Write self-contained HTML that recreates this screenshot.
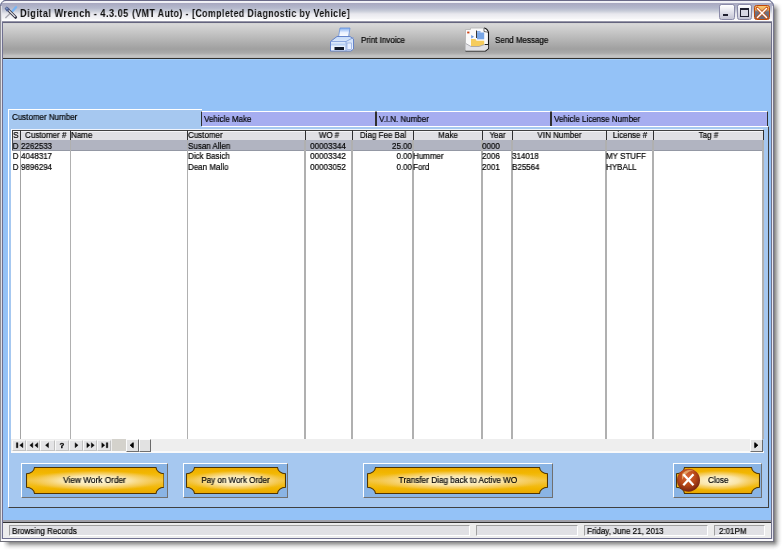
<!DOCTYPE html><html><head><meta charset="utf-8"><style>
*{margin:0;padding:0;box-sizing:border-box}
html,body{width:783px;height:550px;overflow:hidden;background:#fff;font-family:"Liberation Sans",sans-serif;font-size:8px;color:#000}
.a{position:absolute}
.t{position:absolute;white-space:nowrap;line-height:10px;will-change:transform;-webkit-text-stroke:0.2px #000}
</style></head><body>
<div class="a" style="left:774px;top:3px;width:9px;height:539px;background:linear-gradient(90deg,rgba(0,0,0,.52),rgba(0,0,0,.34) 2px,rgba(0,0,0,.16) 4px,rgba(0,0,0,.05) 6px,rgba(0,0,0,0) 8px);-webkit-mask-image:linear-gradient(rgba(0,0,0,0) 0,#000 7px)"></div>
<div class="a" style="left:3px;top:542px;width:771px;height:8px;background:linear-gradient(180deg,rgba(0,0,0,.46),rgba(0,0,0,.32) 2px,rgba(0,0,0,.15) 4px,rgba(0,0,0,.05) 6px,rgba(0,0,0,0) 8px);-webkit-mask-image:linear-gradient(90deg,rgba(0,0,0,0) 0,#000 7px)"></div>
<div class="a" style="left:774px;top:542px;width:9px;height:8px;background:radial-gradient(circle at 0 0,rgba(0,0,0,.48),rgba(0,0,0,.3) 2px,rgba(0,0,0,.14) 4px,rgba(0,0,0,.04) 6px,rgba(0,0,0,0) 8px)"></div>
<div class="a" style="left:0;top:0;width:774px;height:542px;background:#94c2f7;border-radius:6px 6px 0 0;overflow:hidden">
<div class="a" style="left:0;top:0;width:774px;height:23px;background:linear-gradient(#5a5a78 0,#5a5a78 1px,#f2f2f6 1px,#eeeef4 3px,#a8a8c0 3px,#b4b8cc 8px,#c8ccd8 11px,#e8e8ee 14px,#f6f6f8 19px,#ffffff 20px,#fcfcfe 21.3px,#64647e 21.6px,#64647e 23px)"></div>
<div class="a" style="left:0;top:0;width:774px;height:23px;border-radius:6px 6px 0 0;border:1px solid #6a6a88;border-bottom:none"></div>
<div class="t" style="left:19.5px;top:7px;font-weight:bold;font-size:11px;line-height:12px;letter-spacing:0.5px;-webkit-text-stroke:0;color:#101010;transform-origin:0 0;transform:scaleX(0.845)">Digital Wrench - 4.3.05</div>
<div class="t" style="left:132.3px;top:7px;font-weight:bold;font-size:11px;line-height:12px;letter-spacing:0.5px;-webkit-text-stroke:0;color:#101010;transform-origin:0 0;transform:scaleX(0.802)">(VMT Auto) -</div>
<div class="t" style="left:192px;top:7px;font-weight:bold;font-size:11px;line-height:12px;letter-spacing:0.5px;-webkit-text-stroke:0;color:#101010;transform-origin:0 0;transform:scaleX(0.803)">[Completed Diagnostic by Vehicle]</div>
<svg class="a" style="left:3px;top:5px" width="15" height="15" viewBox="0 0 15 15"><path d="M13 2.2 L9.4 6.2" stroke="#78b4f4" stroke-width="2.4" stroke-linecap="round"/><path d="M8.8 6.8 L2.4 13" stroke="#a8a8b0" stroke-width="1.3"/><path d="M4.5 4.2 L12.6 12.3" stroke="#383848" stroke-width="3" stroke-linecap="round"/><path d="M5 4.6 L12.3 11.9" stroke="#f4f4f8" stroke-width="1.1"/><path d="M1.6 3.6 L3.6 1.4 L6.4 3.4 L6 5.6 L3.8 6.4 Z" fill="#506090"/><path d="M2.5 3.2 L3.6 2.2 L5 3.4 L4 4.6 Z" fill="#8098c8"/></svg>
<div class="a" style="left:719px;top:4px;width:15.5px;height:15.5px;border:1px solid #8a8aa8;border-radius:2.5px;background:linear-gradient(#ffffff,#e8e8f0 40%,#c4c4d4)"></div>
<div class="a" style="left:723px;top:14px;width:5px;height:2px;background:#202030"></div>
<div class="a" style="left:736.5px;top:4px;width:15.5px;height:15.5px;border:1px solid #8a8aa8;border-radius:2.5px;background:linear-gradient(#ffffff,#e8e8f0 40%,#c4c4d4)"></div>
<div class="a" style="left:740px;top:8px;width:8.5px;height:8.5px;border:1px solid #202030;border-top-width:2px;background:#d8d8e4"></div>
<div class="a" style="left:754px;top:4.5px;width:15.5px;height:15.5px;border:1px solid #c04808;border-radius:2.5px;background:linear-gradient(#f8c870 0,#f0b060 25%,#707080 45%,#686878)"></div>
<svg class="a" style="left:754px;top:4.5px" width="16" height="16" viewBox="0 0 16 16"><path d="M3.2 3.2 L12.8 12.8 M12.8 3.2 L3.2 12.8" stroke="#c85010" stroke-width="3" stroke-linecap="round"/><path d="M3.5 3.5 L12.5 12.5 M12.5 3.5 L3.5 12.5" stroke="#ffffff" stroke-width="1.5" stroke-linecap="round"/></svg>
<div class="a" style="left:0;top:6px;width:2px;height:536px;background:linear-gradient(90deg,#909098 0,#909098 1px,#e0e0e8 1px,#e0e0e8 2px)"></div>
<div class="a" style="left:2px;top:22px;width:1px;height:520px;background:#707090"></div>
<div class="a" style="left:772px;top:6px;width:2px;height:536px;background:linear-gradient(90deg,#e8e8f0 0,#e8e8f0 1px,#787890 1px)"></div>
<div class="a" style="left:771px;top:22px;width:1px;height:520px;background:#707088"></div>
<div class="a" style="left:3px;top:23px;width:768px;height:36px;background:linear-gradient(#d0d0d0 0,#d8d8d8 1px,#c4c4c4 10px,#a0a0a0 26px,#aaaaaa 30px,#c4c4c4 33px,#bcbcbc 35px,#303030 35px,#303030 36px)"></div>
<div class="a" style="left:3px;top:59px;width:768px;height:1px;background:#a6d0fc"></div>
<div class="t" style="left:360.5px;top:34.6px;font-size:8.5px;transform-origin:0 0;transform:scaleX(0.94);">Print Invoice</div>
<div class="t" style="left:495px;top:34.6px;font-size:8.5px;transform-origin:0 0;transform:scaleX(0.94);">Send Message</div>
<svg class="a" style="left:326px;top:24px" width="32" height="30" viewBox="0 0 32 30"><defs><linearGradient id="pp" x1="0" y1="0" x2="0" y2="1"><stop offset="0" stop-color="#80aef0"/><stop offset="0.5" stop-color="#e8f0ff"/><stop offset="1" stop-color="#ffffff"/></linearGradient><linearGradient id="pb" x1="0" y1="0" x2="0" y2="1"><stop offset="0" stop-color="#c8dcf8"/><stop offset="1" stop-color="#f4f8ff"/></linearGradient></defs><path d="M14 4 L24 4 L22.5 13 L12.5 13 Z" fill="url(#pp)" stroke="#6890d8" stroke-width="0.8"/><path d="M4.5 17.5 L11 12.5 L24 12.5 L27.5 15 L27.5 25 L25 27 L4.5 27 Z" fill="url(#pb)" stroke="#5a7cc8" stroke-width="0.9"/><path d="M4.5 17.5 L20 17.5 L20 27" fill="none" stroke="#7898d8" stroke-width="0.8"/><path d="M20 17.5 L27.5 13.5" fill="none" stroke="#7898d8" stroke-width="0.8"/><rect x="5" y="19.5" width="14.5" height="2" fill="#b8d0f4"/><rect x="8.5" y="23" width="9.5" height="3" fill="#101828"/><rect x="21" y="19" width="4.5" height="6.5" fill="#e8f0ff" stroke="#7898d8" stroke-width="0.6"/></svg>
<svg class="a" style="left:460px;top:24px" width="32" height="30" viewBox="0 0 32 30"><path d="M5.5 5.5 L10.5 5.5 L10.5 4 L24 4 L28.5 8.5 L28.5 24.5 L25.5 27 L5.5 27 Z" fill="#fafafa"/><path d="M5.5 27 L5.5 5.5 L10.5 5.5 L10.5 4 L24 4" fill="none" stroke="#b8b8b8" stroke-width="0.9"/><path d="M24 4 Q27.5 4.5 28.5 8.5 L28.5 24.5 L25.5 27 L5.5 27" fill="none" stroke="#141414" stroke-width="1.1"/><path d="M24 4.2 L24 7.5 L28 8.2" fill="#ffffff" stroke="#303030" stroke-width="0.7"/><rect x="7.2" y="7.6" width="2.2" height="1.8" fill="#d04010"/><path d="M16.5 6.5 L16.5 14" stroke="#202020" stroke-width="0.9"/><rect x="17" y="8.5" width="7.2" height="6.8" fill="#78a6e6"/><rect x="17" y="7" width="3.5" height="1.8" fill="#88b0ec"/><path d="M11.2 11 L14 12.8 L11.2 14.4 Z" fill="#6898e0"/><path d="M11 15 L15.5 15 L16.5 16.8 L24.2 16.8 L24.2 20.5 L19 22.5 L11 22.5 Z" fill="#f6cc5c"/><path d="M5.8 19.5 L11 22.5 L19 22.5 L24.5 20.5 L28.2 20.5 L28.2 24.3 L25.3 26.6 L5.8 26.6 Z" fill="#e2e2e6"/><path d="M5.8 19.5 L11 22.5 L19 22.5 L24.5 20.5" fill="none" stroke="#909098" stroke-width="0.7"/><path d="M24.8 20.5 L28.3 20.5" stroke="#202020" stroke-width="1"/></svg>
<div class="a" style="left:8px;top:126px;width:761px;height:382px;background:#a6c8f0;border-top:1px solid #fff;border-left:1px solid #fff;border-right:1px solid #404040;border-bottom:1px solid #404040"></div>
<div class="a" style="left:8px;top:109px;width:194px;height:19px;background:#a6c8f0;border-top:1px solid #fff;border-left:1px solid #fff"></div>
<div class="t" style="left:12px;top:112px;font-size:8.5px;transform-origin:0 0;transform:scaleX(0.94);">Customer Number</div>
<div class="a" style="left:201px;top:111px;width:175px;height:15px;background:#a6adf0;border-top:1px solid #fff;border-right:1px solid #303030;border-left:1px solid #303030"></div>
<div class="t" style="left:204px;top:114px;font-size:8.5px;transform-origin:0 0;transform:scaleX(0.94);">Vehicle Make</div>
<div class="a" style="left:376px;top:111px;width:175px;height:15px;background:#a6adf0;border-top:1px solid #fff;border-right:1px solid #303030;border-left:1px solid #303030"></div>
<div class="t" style="left:379px;top:114px;font-size:8.5px;transform-origin:0 0;transform:scaleX(0.94);">V.I.N. Number</div>
<div class="a" style="left:551px;top:111px;width:217px;height:15px;background:#a6adf0;border-top:1px solid #fff;border-right:1px solid #303030;border-left:1px solid #303030"></div>
<div class="t" style="left:554px;top:114px;font-size:8.5px;transform-origin:0 0;transform:scaleX(0.94);">Vehicle License Number</div>
<div class="a" style="left:11px;top:129px;width:752px;height:322px;background:#fff"></div>
<div class="a" style="left:12px;top:129px;width:751px;height:1px;background:#f0f4fc"></div>
<div class="a" style="left:12px;top:130px;width:751px;height:10px;background:#e0e0e4;border-top:1px solid #404040;border-left:1px solid #404040"></div>
<div class="a" style="left:13px;top:131px;width:750px;height:1px;background:#f4f4f6"></div>
<div class="a" style="left:12px;top:139.6px;width:751px;height:1px;background:#8c8c94"></div>
<div class="a" style="left:12px;top:140px;width:751px;height:10.5px;background:#b1b4c1;border-left:1px solid #505058"></div>
<div class="a" style="left:12px;top:150px;width:751px;height:0.8px;background:#9498a4"></div>
<div class="a" style="left:19.5px;top:130px;width:1px;height:10px;background:#303030"></div>
<div class="a" style="left:20px;top:140px;width:1.1px;height:299px;background:#a4a4a4"></div>
<div class="a" style="left:70.0px;top:130px;width:1.2px;height:10px;background:#303030"></div>
<div class="a" style="left:69.5px;top:140px;width:1.9px;height:299px;background:#b0b0b0"></div>
<div class="a" style="left:187.0px;top:130px;width:1.2px;height:10px;background:#303030"></div>
<div class="a" style="left:186.5px;top:140px;width:1.9px;height:299px;background:#b0b0b0"></div>
<div class="a" style="left:304.5px;top:130px;width:1.2px;height:10px;background:#303030"></div>
<div class="a" style="left:304px;top:140px;width:1.9px;height:299px;background:#b0b0b0"></div>
<div class="a" style="left:351.5px;top:130px;width:1.2px;height:10px;background:#303030"></div>
<div class="a" style="left:351px;top:140px;width:1.9px;height:299px;background:#b0b0b0"></div>
<div class="a" style="left:412.5px;top:130px;width:1.2px;height:10px;background:#303030"></div>
<div class="a" style="left:412px;top:140px;width:1.9px;height:299px;background:#b0b0b0"></div>
<div class="a" style="left:481.5px;top:130px;width:1.2px;height:10px;background:#303030"></div>
<div class="a" style="left:481px;top:140px;width:1.9px;height:299px;background:#b0b0b0"></div>
<div class="a" style="left:511.5px;top:130px;width:1.2px;height:10px;background:#303030"></div>
<div class="a" style="left:511px;top:140px;width:1.9px;height:299px;background:#b0b0b0"></div>
<div class="a" style="left:605.5px;top:130px;width:1.2px;height:10px;background:#303030"></div>
<div class="a" style="left:605px;top:140px;width:1.9px;height:299px;background:#b0b0b0"></div>
<div class="a" style="left:652.5px;top:130px;width:1.2px;height:10px;background:#303030"></div>
<div class="a" style="left:652px;top:140px;width:1.9px;height:299px;background:#b0b0b0"></div>
<div class="a" style="left:762.5px;top:130px;width:1.2px;height:10px;background:#303030"></div>
<div class="a" style="left:762px;top:140px;width:1.9px;height:299px;background:#b0b0b0"></div>
<div class="t" style="left:12px;width:7.5px;text-align:center;top:130.3px;font-size:8.5px;transform:scaleX(0.94);">S</div>
<div class="t" style="left:21px;width:49.5px;text-align:center;top:130.3px;font-size:8.5px;transform:scaleX(0.94);">Customer #</div>
<div class="t" style="left:71.0px;top:130.3px;font-size:8.5px;transform-origin:0 0;transform:scaleX(0.94);">Name</div>
<div class="t" style="left:188.0px;top:130.3px;font-size:8.5px;transform-origin:0 0;transform:scaleX(0.94);">Customer</div>
<div class="t" style="left:306px;width:46px;text-align:center;top:130.3px;font-size:8.5px;transform:scaleX(0.94);">WO #</div>
<div class="t" style="left:353px;width:60px;text-align:center;top:130.3px;font-size:8.5px;transform:scaleX(0.94);">Diag Fee Bal</div>
<div class="t" style="left:414px;width:68px;text-align:center;top:130.3px;font-size:8.5px;transform:scaleX(0.94);">Make</div>
<div class="t" style="left:483px;width:29px;text-align:center;top:130.3px;font-size:8.5px;transform:scaleX(0.94);">Year</div>
<div class="t" style="left:513px;width:93px;text-align:center;top:130.3px;font-size:8.5px;transform:scaleX(0.94);">VIN Number</div>
<div class="t" style="left:607px;width:46px;text-align:center;top:130.3px;font-size:8.5px;transform:scaleX(0.94);">License #</div>
<div class="t" style="left:654px;width:109px;text-align:center;top:130.3px;font-size:8.5px;transform:scaleX(0.94);">Tag #</div>
<div class="t" style="left:12px;width:7px;text-align:center;top:140.8px;font-size:8.5px;transform:scaleX(0.94);">D</div>
<div class="t" style="left:21px;top:140.8px;font-size:8.5px;transform-origin:0 0;transform:scaleX(0.94);">2262533</div>
<div class="t" style="left:187.9px;top:140.8px;font-size:8.5px;transform-origin:0 0;transform:scaleX(0.94);">Susan Allen</div>
<div class="t" style="left:305px;width:46px;text-align:center;top:140.8px;font-size:8.5px;transform:scaleX(0.94);">00003344</div>
<div class="t" style="left:352px;width:60px;text-align:right;top:140.8px;font-size:8.5px;transform-origin:100% 0;transform:scaleX(0.94);">25.00</div>
<div class="t" style="left:482.4px;top:140.8px;font-size:8.5px;transform-origin:0 0;transform:scaleX(0.94);">0000</div>
<div class="t" style="left:12px;width:7px;text-align:center;top:151.3px;font-size:8.5px;transform:scaleX(0.94);">D</div>
<div class="t" style="left:21px;top:151.3px;font-size:8.5px;transform-origin:0 0;transform:scaleX(0.94);">4048317</div>
<div class="t" style="left:187.9px;top:151.3px;font-size:8.5px;transform-origin:0 0;transform:scaleX(0.94);">Dick Basich</div>
<div class="t" style="left:305px;width:46px;text-align:center;top:151.3px;font-size:8.5px;transform:scaleX(0.94);">00003342</div>
<div class="t" style="left:352px;width:60px;text-align:right;top:151.3px;font-size:8.5px;transform-origin:100% 0;transform:scaleX(0.94);">0.00</div>
<div class="t" style="left:413.4px;top:151.3px;font-size:8.5px;transform-origin:0 0;transform:scaleX(0.94);">Hummer</div>
<div class="t" style="left:482.4px;top:151.3px;font-size:8.5px;transform-origin:0 0;transform:scaleX(0.94);">2006</div>
<div class="t" style="left:512.4px;top:151.3px;font-size:8.5px;transform-origin:0 0;transform:scaleX(0.94);">314018</div>
<div class="t" style="left:606.4px;top:151.3px;font-size:8.5px;transform-origin:0 0;transform:scaleX(0.94);">MY STUFF</div>
<div class="t" style="left:12px;width:7px;text-align:center;top:161.8px;font-size:8.5px;transform:scaleX(0.94);">D</div>
<div class="t" style="left:21px;top:161.8px;font-size:8.5px;transform-origin:0 0;transform:scaleX(0.94);">9896294</div>
<div class="t" style="left:187.9px;top:161.8px;font-size:8.5px;transform-origin:0 0;transform:scaleX(0.94);">Dean Mallo</div>
<div class="t" style="left:305px;width:46px;text-align:center;top:161.8px;font-size:8.5px;transform:scaleX(0.94);">00003052</div>
<div class="t" style="left:352px;width:60px;text-align:right;top:161.8px;font-size:8.5px;transform-origin:100% 0;transform:scaleX(0.94);">0.00</div>
<div class="t" style="left:413.4px;top:161.8px;font-size:8.5px;transform-origin:0 0;transform:scaleX(0.94);">Ford</div>
<div class="t" style="left:482.4px;top:161.8px;font-size:8.5px;transform-origin:0 0;transform:scaleX(0.94);">2001</div>
<div class="t" style="left:512.4px;top:161.8px;font-size:8.5px;transform-origin:0 0;transform:scaleX(0.94);">B25564</div>
<div class="t" style="left:606.4px;top:161.8px;font-size:8.5px;transform-origin:0 0;transform:scaleX(0.94);">HYBALL</div>
<div class="a" style="left:11px;top:439px;width:752px;height:12px;background:#eeeeee"></div>
<div class="a" style="left:11px;top:451px;width:753px;height:1.5px;background:#fafafa"></div>
<div class="a" style="left:12.0px;top:439.5px;width:14.2px;height:11px;background:#e4e4e6;border-top:1px solid #f4f4f4;border-left:1px solid #fafafa;border-right:1px solid #c0c0c0;border-bottom:1px solid #c4c4c4"></div>
<svg class="a" style="left:12.0px;top:439px" width="14" height="12" viewBox="0 0 14 12"><path d="M4.4 3.7 H5.9 V8.7 H4.4 Z M10.9 3.7 L7.7 6.2 L10.9 8.7 Z" fill="#080808" stroke="#080808" stroke-width="0.4"/></svg>
<div class="a" style="left:26.2px;top:439.5px;width:14.2px;height:11px;background:#e4e4e6;border-top:1px solid #f4f4f4;border-left:1px solid #fafafa;border-right:1px solid #c0c0c0;border-bottom:1px solid #c4c4c4"></div>
<svg class="a" style="left:26.2px;top:439px" width="14" height="12" viewBox="0 0 14 12"><path d="M6.8 3.7 L3.8 6.2 L6.8 8.7 Z M11.8 3.7 L8.8 6.2 L11.8 8.7 Z" fill="#080808" stroke="#080808" stroke-width="0.4"/></svg>
<div class="a" style="left:40.4px;top:439.5px;width:14.2px;height:11px;background:#e4e4e6;border-top:1px solid #f4f4f4;border-left:1px solid #fafafa;border-right:1px solid #c0c0c0;border-bottom:1px solid #c4c4c4"></div>
<svg class="a" style="left:40.4px;top:439px" width="14" height="12" viewBox="0 0 14 12"><path d="M8.5 3.7 L5.5 6.2 L8.5 8.7 Z" fill="#080808" stroke="#080808" stroke-width="0.4"/></svg>
<div class="a" style="left:54.6px;top:439.5px;width:14.2px;height:11px;background:#e4e4e6;border-top:1px solid #f4f4f4;border-left:1px solid #fafafa;border-right:1px solid #c0c0c0;border-bottom:1px solid #c4c4c4"></div>
<div class="t" style="left:54.6px;width:14px;text-align:center;top:440.5px;font-size:8px;font-weight:bold;color:#000;-webkit-text-stroke:0.3px #000">?</div>
<div class="a" style="left:68.8px;top:439.5px;width:14.2px;height:11px;background:#e4e4e6;border-top:1px solid #f4f4f4;border-left:1px solid #fafafa;border-right:1px solid #c0c0c0;border-bottom:1px solid #c4c4c4"></div>
<svg class="a" style="left:68.8px;top:439px" width="14" height="12" viewBox="0 0 14 12"><path d="M6.1 3.7 L9.1 6.2 L6.1 8.7 Z" fill="#080808" stroke="#080808" stroke-width="0.4"/></svg>
<div class="a" style="left:83.0px;top:439.5px;width:14.2px;height:11px;background:#e4e4e6;border-top:1px solid #f4f4f4;border-left:1px solid #fafafa;border-right:1px solid #c0c0c0;border-bottom:1px solid #c4c4c4"></div>
<svg class="a" style="left:83.0px;top:439px" width="14" height="12" viewBox="0 0 14 12"><path d="M3.9 3.7 L6.9 6.2 L3.9 8.7 Z M8.3 3.7 L11.3 6.2 L8.3 8.7 Z" fill="#080808" stroke="#080808" stroke-width="0.4"/></svg>
<div class="a" style="left:97.2px;top:439.5px;width:14.2px;height:11px;background:#e4e4e6;border-top:1px solid #f4f4f4;border-left:1px solid #fafafa;border-right:1px solid #c0c0c0;border-bottom:1px solid #c4c4c4"></div>
<svg class="a" style="left:97.2px;top:439px" width="14" height="12" viewBox="0 0 14 12"><path d="M4.8 3.7 L7.8 6.2 L4.8 8.7 Z M9.3 3.7 H10.8 V8.7 H9.3 Z" fill="#080808" stroke="#080808" stroke-width="0.4"/></svg>
<div class="a" style="left:111.5px;top:439px;width:14.5px;height:12px;background:#d4d2cc"></div>
<div class="a" style="left:126px;top:439px;width:13px;height:12.5px;background:#e2e2e2;border-top:1px solid #fcfcfc;border-left:1px solid #fcfcfc;border-right:1.5px solid #6a6a6a;border-bottom:1.5px solid #707070"></div>
<svg class="a" style="left:126px;top:439px" width="13" height="12" viewBox="0 0 13 12"><path d="M7.2 3.7 L4.2 6.2 L7.2 8.7 Z" fill="#000" stroke="#000" stroke-width="1"/></svg>
<div class="a" style="left:139px;top:439px;width:12px;height:12.5px;background:#e2e2e2;border-top:1px solid #fcfcfc;border-left:1px solid #fcfcfc;border-right:1.5px solid #6a6a6a;border-bottom:1.5px solid #707070"></div>
<div class="a" style="left:750px;top:439px;width:13px;height:12.5px;background:#e2e2e2;border-top:1px solid #fcfcfc;border-left:1px solid #fcfcfc;border-right:1.5px solid #6a6a6a;border-bottom:1.5px solid #707070"></div>
<svg class="a" style="left:750px;top:439px" width="13" height="12" viewBox="0 0 13 12"><path d="M4.8 3.7 L7.8 6.2 L4.8 8.7 Z" fill="#000" stroke="#000" stroke-width="1"/></svg>
<div class="a" style="left:21px;top:463px;width:147px;height:34.6px;background:#8ab4e4;border-top:1px solid #fff;border-left:1px solid #fff;border-right:1px solid #707070;border-bottom:1.5px solid #707070"></div>
<svg class="a" style="left:25.5px;top:466.7px" width="138.5" height="27" viewBox="0 0 138.5 27"><defs><linearGradient id="lg1" x1="0" y1="0" x2="0" y2="1"><stop offset="0" stop-color="#eeac00"/><stop offset="0.2" stop-color="#f2b600"/><stop offset="0.5" stop-color="#f4c640"/><stop offset="0.8" stop-color="#f2b600"/><stop offset="1" stop-color="#e8a600"/></linearGradient><radialGradient id="rg1" cx="50%" cy="50%" r="50%"><stop offset="0" stop-color="#fffae6" stop-opacity="1"/><stop offset="0.5" stop-color="#fae6ac" stop-opacity="0.95"/><stop offset="0.8" stop-color="#f6d070" stop-opacity="0.6"/><stop offset="1" stop-color="#f4c850" stop-opacity="0"/></radialGradient></defs><path d="M8.5 0.5 H130.0 A8.5 6.8 0 0 0 138.0 6.8 V20.2 A8.5 6.8 0 0 0 130.0 26.5 H8.5 A8.5 6.8 0 0 0 0.5 20.2 V6.8 A8.5 6.8 0 0 0 8.5 0.5 Z" fill="url(#lg1)"/><ellipse cx="69.25" cy="13.6" rx="69.25" ry="10" fill="url(#rg1)"/><path d="M8.5 0.5 H130.0 A8.5 6.8 0 0 0 138.0 6.8 V20.2 A8.5 6.8 0 0 0 130.0 26.5 H8.5 A8.5 6.8 0 0 0 0.5 20.2 V6.8 A8.5 6.8 0 0 0 8.5 0.5 Z" fill="none" stroke="#503400" stroke-width="1.1"/></svg>
<div class="t" style="left:21px;width:147px;text-align:center;top:475.2px;font-size:8.5px;transform:scaleX(0.975);">View Work Order</div>
<div class="a" style="left:183px;top:463px;width:105px;height:34.6px;background:#8ab4e4;border-top:1px solid #fff;border-left:1px solid #fff;border-right:1px solid #707070;border-bottom:1.5px solid #707070"></div>
<svg class="a" style="left:185.5px;top:466.7px" width="100.0" height="27" viewBox="0 0 100.0 27"><defs><linearGradient id="lg2" x1="0" y1="0" x2="0" y2="1"><stop offset="0" stop-color="#eeac00"/><stop offset="0.2" stop-color="#f2b600"/><stop offset="0.5" stop-color="#f4c640"/><stop offset="0.8" stop-color="#f2b600"/><stop offset="1" stop-color="#e8a600"/></linearGradient><radialGradient id="rg2" cx="50%" cy="50%" r="50%"><stop offset="0" stop-color="#fffae6" stop-opacity="1"/><stop offset="0.5" stop-color="#fae6ac" stop-opacity="0.95"/><stop offset="0.8" stop-color="#f6d070" stop-opacity="0.6"/><stop offset="1" stop-color="#f4c850" stop-opacity="0"/></radialGradient></defs><path d="M8.5 0.5 H91.5 A8.5 6.8 0 0 0 99.5 6.8 V20.2 A8.5 6.8 0 0 0 91.5 26.5 H8.5 A8.5 6.8 0 0 0 0.5 20.2 V6.8 A8.5 6.8 0 0 0 8.5 0.5 Z" fill="url(#lg2)"/><ellipse cx="50.0" cy="13.6" rx="50.0" ry="10" fill="url(#rg2)"/><path d="M8.5 0.5 H91.5 A8.5 6.8 0 0 0 99.5 6.8 V20.2 A8.5 6.8 0 0 0 91.5 26.5 H8.5 A8.5 6.8 0 0 0 0.5 20.2 V6.8 A8.5 6.8 0 0 0 8.5 0.5 Z" fill="none" stroke="#503400" stroke-width="1.1"/></svg>
<div class="t" style="left:183px;width:105px;text-align:center;top:475.2px;font-size:8.5px;transform:scaleX(0.94);">Pay on Work Order</div>
<div class="a" style="left:363px;top:463px;width:190px;height:34.6px;background:#8ab4e4;border-top:1px solid #fff;border-left:1px solid #fff;border-right:1px solid #707070;border-bottom:1.5px solid #707070"></div>
<svg class="a" style="left:367px;top:466.7px" width="181" height="27" viewBox="0 0 181 27"><defs><linearGradient id="lg3" x1="0" y1="0" x2="0" y2="1"><stop offset="0" stop-color="#eeac00"/><stop offset="0.2" stop-color="#f2b600"/><stop offset="0.5" stop-color="#f4c640"/><stop offset="0.8" stop-color="#f2b600"/><stop offset="1" stop-color="#e8a600"/></linearGradient><radialGradient id="rg3" cx="50%" cy="50%" r="50%"><stop offset="0" stop-color="#fffae6" stop-opacity="1"/><stop offset="0.5" stop-color="#fae6ac" stop-opacity="0.95"/><stop offset="0.8" stop-color="#f6d070" stop-opacity="0.6"/><stop offset="1" stop-color="#f4c850" stop-opacity="0"/></radialGradient></defs><path d="M8.5 0.5 H172.5 A8.5 6.8 0 0 0 180.5 6.8 V20.2 A8.5 6.8 0 0 0 172.5 26.5 H8.5 A8.5 6.8 0 0 0 0.5 20.2 V6.8 A8.5 6.8 0 0 0 8.5 0.5 Z" fill="url(#lg3)"/><ellipse cx="90.5" cy="13.6" rx="90.5" ry="10" fill="url(#rg3)"/><path d="M8.5 0.5 H172.5 A8.5 6.8 0 0 0 180.5 6.8 V20.2 A8.5 6.8 0 0 0 172.5 26.5 H8.5 A8.5 6.8 0 0 0 0.5 20.2 V6.8 A8.5 6.8 0 0 0 8.5 0.5 Z" fill="none" stroke="#503400" stroke-width="1.1"/></svg>
<div class="t" style="left:363px;width:190px;text-align:center;top:475.2px;font-size:8.5px;transform:scaleX(0.965);">Transfer Diag back to Active WO</div>
<div class="a" style="left:673px;top:463px;width:89px;height:34.6px;background:#8ab4e4;border-top:1px solid #fff;border-left:1px solid #fff;border-right:1px solid #707070;border-bottom:1.5px solid #707070"></div>
<svg class="a" style="left:676px;top:466.7px" width="84" height="27" viewBox="0 0 84 27"><defs><linearGradient id="lg4" x1="0" y1="0" x2="0" y2="1"><stop offset="0" stop-color="#eeac00"/><stop offset="0.2" stop-color="#f2b600"/><stop offset="0.5" stop-color="#f4c640"/><stop offset="0.8" stop-color="#f2b600"/><stop offset="1" stop-color="#e8a600"/></linearGradient><radialGradient id="rg4" cx="50%" cy="50%" r="50%"><stop offset="0" stop-color="#fffae6" stop-opacity="1"/><stop offset="0.5" stop-color="#fae6ac" stop-opacity="0.95"/><stop offset="0.8" stop-color="#f6d070" stop-opacity="0.6"/><stop offset="1" stop-color="#f4c850" stop-opacity="0"/></radialGradient></defs><path d="M8.5 0.5 H75.5 A8.5 6.8 0 0 0 83.5 6.8 V20.2 A8.5 6.8 0 0 0 75.5 26.5 H8.5 A8.5 6.8 0 0 0 0.5 20.2 V6.8 A8.5 6.8 0 0 0 8.5 0.5 Z" fill="url(#lg4)"/><ellipse cx="42.0" cy="13.6" rx="42.0" ry="10" fill="url(#rg4)"/><path d="M8.5 0.5 H75.5 A8.5 6.8 0 0 0 83.5 6.8 V20.2 A8.5 6.8 0 0 0 75.5 26.5 H8.5 A8.5 6.8 0 0 0 0.5 20.2 V6.8 A8.5 6.8 0 0 0 8.5 0.5 Z" fill="none" stroke="#503400" stroke-width="1.1"/></svg>
<div class="t" style="left:707.5px;top:475.2px;font-size:8.5px;transform-origin:0 0;transform:scaleX(0.94);">Close</div>
<svg class="a" style="left:676px;top:468px" width="25" height="25" viewBox="0 0 25 25"><defs><radialGradient id="cr" cx="45%" cy="35%" r="60%"><stop offset="0" stop-color="#d86838"/><stop offset="0.6" stop-color="#b84818"/><stop offset="1" stop-color="#802810"/></radialGradient></defs><circle cx="12.5" cy="12.2" r="11.5" fill="url(#cr)"/><path d="M6 12 Q12.5 0 19 4 Q12.5 -1 6 6 Z" fill="#f0c080" opacity="0.7"/><path d="M7.3 6.3 L17.5 17.3 M17.5 6.3 L7.3 17.3" stroke="#fff" stroke-width="2.3"/></svg>
<div class="a" style="left:3px;top:520px;width:768px;height:2px;background:#a0a0a8"></div>
<div class="a" style="left:3px;top:522px;width:768px;height:1px;background:#303030"></div>
<div class="a" style="left:3px;top:523px;width:768px;height:15px;background:#ececec"></div>
<div class="a" style="left:9px;top:525px;width:461px;height:11px;background:#e0e0e4;border-top:1px solid #a0a0a0;border-left:1px solid #a0a0a0;border-right:1px solid #fff;border-bottom:1px solid #fff"></div>
<div class="t" style="left:12px;top:526px;font-size:8.5px;transform-origin:0 0;transform:scaleX(0.94);">Browsing Records</div>
<div class="a" style="left:476px;top:525px;width:102px;height:11px;background:#e0e0e4;border-top:1px solid #a0a0a0;border-left:1px solid #a0a0a0;border-right:1px solid #fff;border-bottom:1px solid #fff"></div>
<div class="a" style="left:584px;top:525px;width:124px;height:11px;background:#e0e0e4;border-top:1px solid #a0a0a0;border-left:1px solid #a0a0a0;border-right:1px solid #fff;border-bottom:1px solid #fff"></div>
<div class="t" style="left:586.8px;top:526px;font-size:8.5px;transform-origin:0 0;transform:scaleX(0.94);">Friday, June 21, 2013</div>
<div class="a" style="left:714px;top:525px;width:51px;height:11px;background:#e0e0e4;border-top:1px solid #a0a0a0;border-left:1px solid #a0a0a0;border-right:1px solid #fff;border-bottom:1px solid #fff"></div>
<div class="t" style="left:718.6px;top:526px;font-size:8.5px;transform-origin:0 0;transform:scaleX(0.94);">2:01PM</div>
<div class="a" style="left:2px;top:538px;width:770px;height:1px;background:#707090"></div>
<div class="a" style="left:1px;top:539px;width:772px;height:2px;background:#fafafc"></div>
<div class="a" style="left:0;top:541px;width:774px;height:1px;background:#6e6e78"></div>
</div></body></html>
